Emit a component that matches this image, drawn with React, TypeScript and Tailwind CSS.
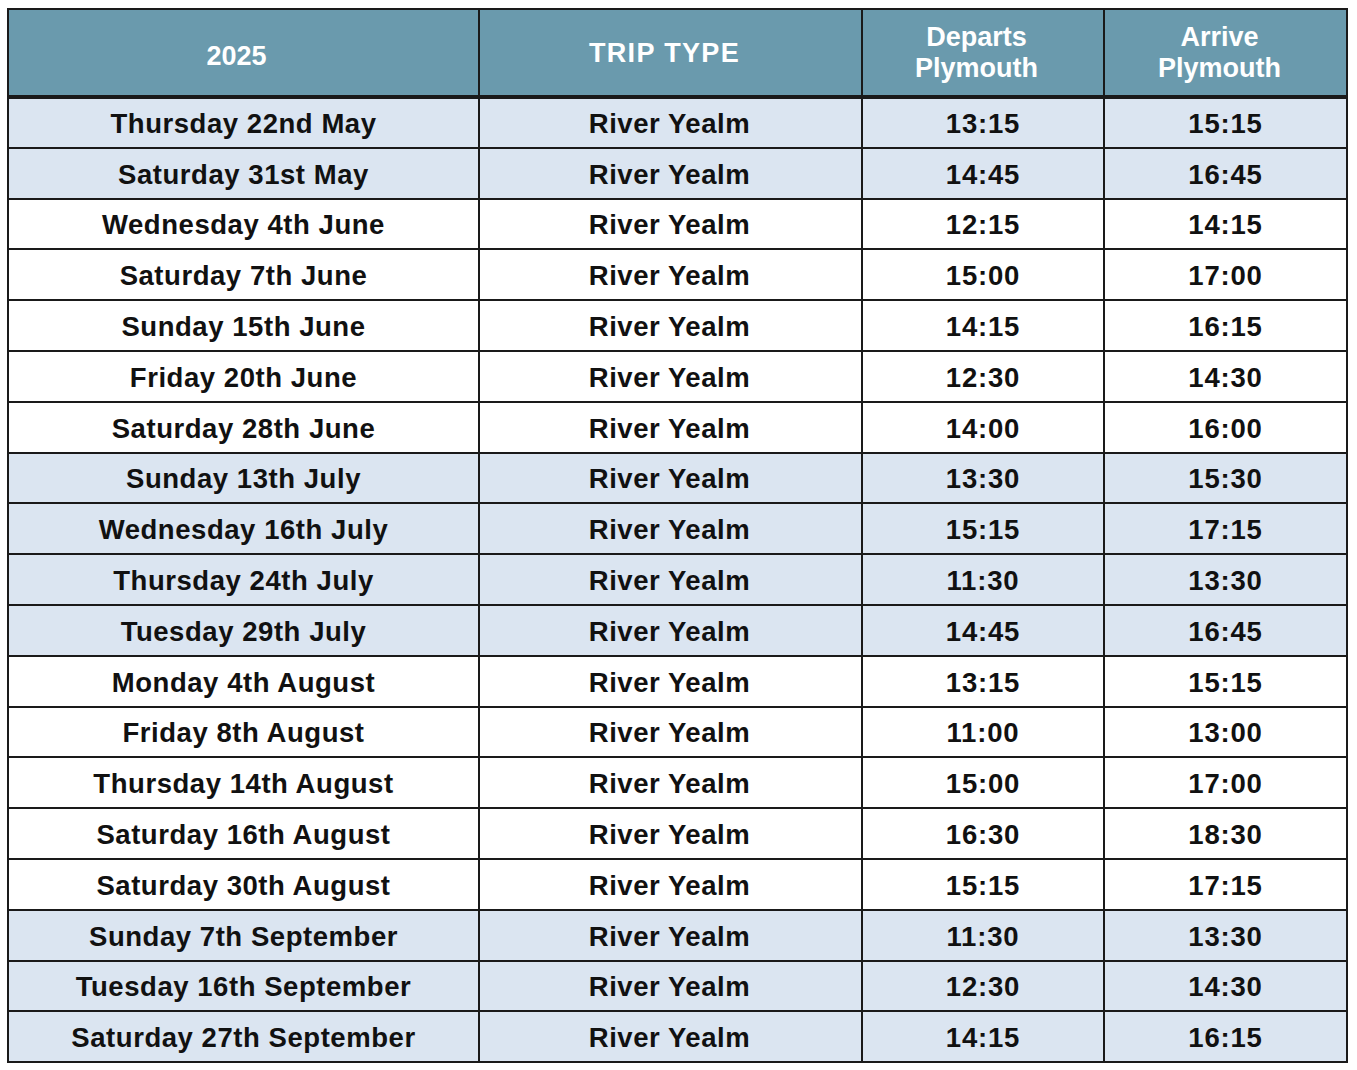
import React from "react";

const rows: [string, string, string, boolean][] = [
  ["Thursday 22nd May", "13:15", "15:15", true],
  ["Saturday 31st May", "14:45", "16:45", true],
  ["Wednesday 4th June", "12:15", "14:15", false],
  ["Saturday 7th June", "15:00", "17:00", false],
  ["Sunday 15th June", "14:15", "16:15", false],
  ["Friday 20th June", "12:30", "14:30", false],
  ["Saturday 28th June", "14:00", "16:00", false],
  ["Sunday 13th July", "13:30", "15:30", true],
  ["Wednesday 16th July", "15:15", "17:15", true],
  ["Thursday 24th July", "11:30", "13:30", true],
  ["Tuesday 29th July", "14:45", "16:45", true],
  ["Monday 4th August", "13:15", "15:15", false],
  ["Friday 8th August", "11:00", "13:00", false],
  ["Thursday 14th August", "15:00", "17:00", false],
  ["Saturday 16th August", "16:30", "18:30", false],
  ["Saturday 30th August", "15:15", "17:15", false],
  ["Sunday 7th September", "11:30", "13:30", true],
  ["Tuesday 16th September", "12:30", "14:30", true],
  ["Saturday 27th September", "14:15", "16:15", true],
];

export default function App() {
  return (
    <div
      className="w-[1357px] h-[1070px] bg-white pt-[8px] pl-[7px]"
      style={{ fontFamily: '"Liberation Sans", Arial, sans-serif' }}
    >
      <table className="border-collapse border-2 border-[#1a1a1a] w-[1339px] table-fixed font-bold text-[27.5px] text-[#111]">
        <colgroup>
          <col className="w-[471px]" />
          <col className="w-[383px]" />
          <col className="w-[242px]" />
          <col className="w-[243px]" />
        </colgroup>
        <thead>
          <tr className="h-[88px] bg-[#6a9aad] text-white text-[27px]">
            <th className="border-2 border-b-4 border-[#1a1a1a] text-center align-middle font-bold pt-[8px] pr-[14px]">2025</th>
            <th className="border-2 border-b-4 border-[#1a1a1a] text-center align-middle font-bold tracking-[0.05em] pt-[2px] pr-[12px]">TRIP TYPE</th>
            <th className="border-2 border-b-4 border-[#1a1a1a] text-center align-middle font-bold leading-[31px] pr-[13px]">
              Departs
              <br />
              Plymouth
            </th>
            <th className="border-2 border-b-4 border-[#1a1a1a] text-center align-middle font-bold leading-[31px] pr-[12px]">
              Arrive
              <br />
              Plymouth
            </th>
          </tr>
        </thead>
        <tbody>
          {rows.map(([d, dep, arr, shaded], i) => (
            <tr key={i} className={`h-[50.8px] ${shaded ? "bg-[#dbe5f1]" : "bg-white"}`}>
              <td className="border-2 border-[#1a1a1a] text-center align-middle tracking-[0.02em] pt-[2px]">{d}</td>
              <td className="border-2 border-[#1a1a1a] text-center align-middle tracking-[0.02em] pt-[2px] pr-[2px]">River Yealm</td>
              <td className="border-2 border-[#1a1a1a] text-center align-middle tracking-[0.03em] pt-[2px]">{dep}</td>
              <td className="border-2 border-[#1a1a1a] text-center align-middle tracking-[0.03em] pt-[2px]">{arr}</td>
            </tr>
          ))}
        </tbody>
      </table>
    </div>
  );
}
